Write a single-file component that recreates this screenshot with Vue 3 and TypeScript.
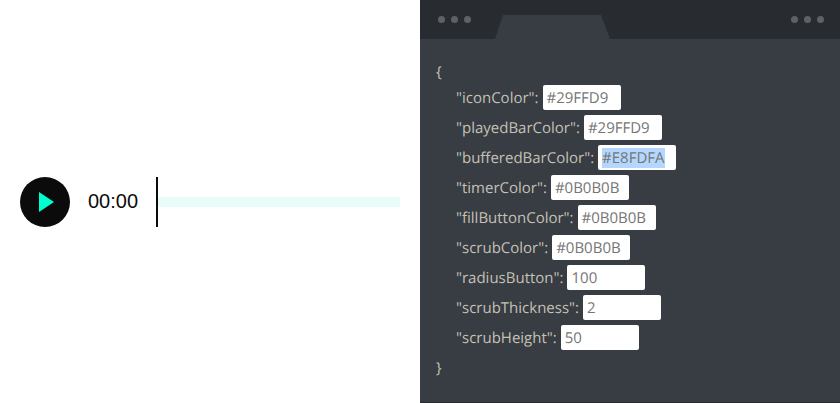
<script setup lang="ts">
interface Row {
  key: string
  value: string
  selected?: boolean
}

const rows: Row[] = [
  { key: 'iconColor', value: '#29FFD9' },
  { key: 'playedBarColor', value: '#29FFD9' },
  { key: 'bufferedBarColor', value: '#E8FDFA', selected: true },
  { key: 'timerColor', value: '#0B0B0B' },
  { key: 'fillButtonColor', value: '#0B0B0B' },
  { key: 'scrubColor', value: '#0B0B0B' },
  { key: 'radiusButton', value: '100' },
  { key: 'scrubThickness', value: '2' },
  { key: 'scrubHeight', value: '50' },
]
</script>

<template>
  <div class="page">
    <section class="player-side">
      <div class="player">
        <button class="play" type="button" aria-label="Play">
          <svg width="15" height="20" viewBox="0 0 15 20"><path d="M0 0 L15 10 L0 20 Z" fill="#00ffd0" /></svg>
        </button>
        <span class="timer">00:00</span>
        <div class="track">
          <div class="scrub"></div>
          <div class="bar"></div>
        </div>
      </div>
    </section>
    <section class="editor">
      <header class="tabs">
        <div class="dots"><i></i><i></i><i></i></div>
        <svg class="tab" width="115" height="24" viewBox="0 0 115 24"><path d="M0 24 L8 0 H106 L115 24 Z" fill="#383c43" /></svg>
        <div class="dots"><i></i><i></i><i></i></div>
      </header>
      <div class="code">
        <div class="brace first">{</div>
        <div v-for="row in rows" :key="row.key" class="row">
          <span class="key">"{{ row.key }}":</span>
          <div class="field"><span :class="{ selected: row.selected }">{{ row.value }}</span></div>
        </div>
        <div class="brace last">}</div>
      </div>
    </section>
  </div>
</template>

<style>
html, body { margin: 0; background: #fff; }
</style>

<style scoped>
.page {
  display: flex;
  width: 840px;
  height: 403px;
  overflow: hidden;
}
.player-side {
  width: 420px;
  flex: none;
  display: flex;
  align-items: center;
  padding: 0 20px;
  box-sizing: border-box;
}
.player {
  display: flex;
  align-items: center;
  width: 100%;
  height: 50px;
}
.play {
  width: 50px;
  height: 50px;
  flex: none;
  border: 0;
  padding: 0 0 0 3px;
  border-radius: 50%;
  background: #0b0b0b;
  display: flex;
  align-items: center;
  justify-content: center;
}
.timer {
  margin-left: 18px;
  margin-bottom: 2px;
  width: 68px;
  flex: none;
  font: 20px/24px "Liberation Sans", Arial, sans-serif;
  color: #0b0b0b;
}
.track {
  flex: 1;
  display: flex;
  align-items: center;
  height: 50px;
}
.scrub {
  width: 2px;
  height: 50px;
  background: #0b0b0b;
  flex: none;
}
.bar {
  flex: 1;
  height: 10px;
  background: #e8fdfa;
}
.editor {
  width: 420px;
  flex: none;
  height: 403px;
  background: #383c43;
  border-bottom: 1px solid #282b30;
  box-sizing: border-box;
  font: 15px/20px "Open Sans", sans-serif;
  color: #c4c1b6;
  text-rendering: geometricPrecision;
}
.tabs {
  height: 39px;
  background: #282b30;
  display: flex;
  justify-content: space-between;
  padding: 16px 16px 0 18px;
  box-sizing: border-box;
  position: relative;
}
.tab {
  position: absolute;
  left: 75px;
  top: 15px;
}
.dots {
  display: flex;
  gap: 6px;
  height: 7px;
}
.dots i {
  width: 7px;
  height: 7px;
  border-radius: 50%;
  background: #5c6269;
}
.code {
  padding-top: 18px;
}
.brace {
  padding-left: 16px;
  height: 30px;
  line-height: 30px;
}
.first {
  height: 26px;
}
.row {
  height: 30px;
  padding: 2px 0 0 36px;
  box-sizing: border-box;
  display: flex;
  align-items: flex-start;
  gap: 4px;
}
.key {
  line-height: 26px;
}
.field {
  width: 78px;
  height: 25px;
  background: #fff;
  border-radius: 2px;
  box-sizing: border-box;
  padding: 3px 4px;
  color: #757575;
  line-height: 20px;
}
.selected {
  background: #b4d7fe;
  display: inline-block;
}
</style>
